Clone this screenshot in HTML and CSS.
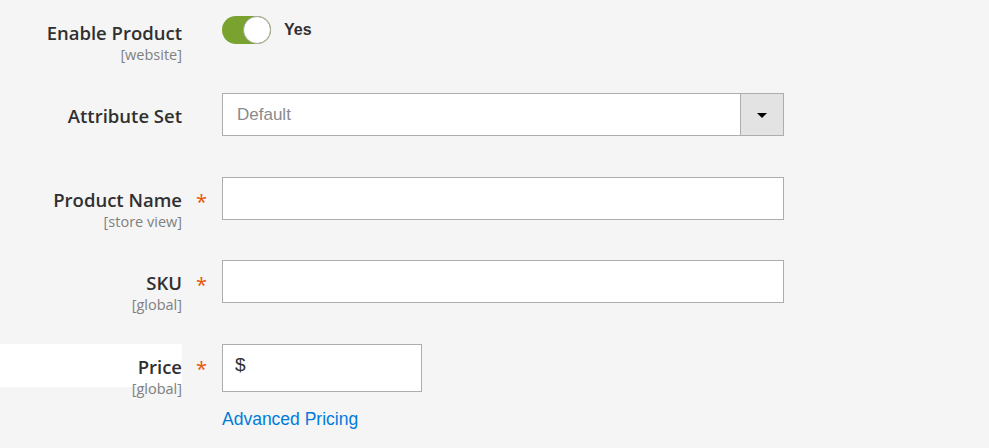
FILE: index.html
```html
<!DOCTYPE html>
<html lang="en">
<head>
    <meta charset="UTF-8">
    <meta name="viewport" content="width=device-width, initial-scale=1.0">
    <title>New Product</title>
    <link rel="stylesheet" href="styles.css">
</head>
<body>
    <div class="form">
        <div class="field field-toggle">
            <div class="field-label">
                <label>Enable Product</label>
                <span class="scope">[website]</span>
            </div>
            <div class="field-mark"></div>
            <div class="field-control">
                <span class="switch"><span class="knob"></span></span>
                <span class="switch-text">Yes</span>
            </div>
        </div>

        <div class="field">
            <div class="field-label">
                <label>Attribute Set</label>
            </div>
            <div class="field-mark"></div>
            <div class="field-control">
                <div class="select">
                    <span class="select-value">Default</span>
                    <span class="select-btn"><span class="arrow"></span></span>
                </div>
            </div>
        </div>

        <div class="field">
            <div class="field-label">
                <label>Product Name</label>
                <span class="scope">[store view]</span>
            </div>
            <div class="field-mark">*</div>
            <div class="field-control">
                <input class="text-input" type="text">
            </div>
        </div>

        <div class="field">
            <div class="field-label">
                <label>SKU</label>
                <span class="scope">[global]</span>
            </div>
            <div class="field-mark">*</div>
            <div class="field-control">
                <input class="text-input" type="text">
            </div>
        </div>

        <div class="field field-price">
            <div class="field-label">
                <label>Price</label>
                <span class="scope">[global]</span>
            </div>
            <div class="field-mark">*</div>
            <div class="field-control">
                <div class="price-input">$</div>
                <a class="link" href="#">Advanced Pricing</a>
            </div>
        </div>
    </div>
</body>
</html>
```

FILE: styles.css
```css
body {
    margin: 0;
    background-color: #f5f5f5;
    font-family: "Open Sans", sans-serif;
    color: #303030;
}
.form {
    padding-top: 10px;
}
.field {
    display: grid;
    grid-template-columns: 182px 40px 562px;
    margin-bottom: 40.5px;
}
.field-toggle {
    margin-bottom: 40px;
}
.field-label {
    text-align: right;
    padding-top: 12px;
    height: 31px;
}
.field-label label {
    display: block;
    font-size: 18.5px;
    font-weight: 600;
    line-height: 21px;
}
.scope {
    display: block;
    margin-top: 3px;
    font-size: 14.5px;
    line-height: 17px;
    color: #808080;
}
.field-price .field-label {
    background: white;
}
.field-mark {
    color: #eb5202;
    font-size: 20px;
    line-height: 1;
    padding-top: 15px;
    padding-left: 14px;
}
.field-toggle .field-control {
    display: flex;
    align-items: flex-start;
    gap: 13px;
    padding-top: 6px;
}
.switch {
    position: relative;
    display: block;
    width: 49px;
    height: 28px;
    border-radius: 14px;
    background: #79a22e;
}
.knob {
    position: absolute;
    right: 0;
    top: 0;
    width: 26px;
    height: 26px;
    border-radius: 50%;
    background: white;
    border: 1px solid #a6a6a6;
}
.switch-text {
    font-family: "Liberation Sans", Arial, sans-serif;
    font-weight: bold;
    font-size: 16px;
    line-height: 1;
    padding-top: 6px;
}
.select {
    display: flex;
    height: 43px;
    box-sizing: border-box;
    border: 1px solid #adadad;
    background: white;
}
.select-value {
    flex: 1;
    font-family: "Liberation Sans", Arial, sans-serif;
    font-size: 17px;
    color: #8a8a8a;
    padding-left: 14px;
    line-height: 41px;
}
.select-btn {
    width: 42px;
    background: #e3e3e3;
    border-left: 1px solid #adadad;
    display: flex;
    align-items: center;
    justify-content: center;
}
.arrow {
    width: 0;
    height: 0;
    border-left: 5px solid transparent;
    border-right: 5px solid transparent;
    border-top: 5px solid #000;
    margin-top: 1px;
}
.text-input {
    display: block;
    width: 100%;
    height: 43px;
    box-sizing: border-box;
    border: 1px solid #adadad;
    background: white;
    margin: 0;
    padding: 0 12px;
    font-size: 16px;
    outline: none;
}
.price-input {
    width: 200px;
    height: 48px;
    box-sizing: border-box;
    border: 1px solid #adadad;
    background: white;
    font-family: "Liberation Sans", Arial, sans-serif;
    font-size: 19px;
    padding: 9px 0 0 12px;
    color: #303030;
}
.link {
    display: inline-block;
    margin-top: 17px;
    font-family: "Liberation Sans", Arial, sans-serif;
    font-size: 17.5px;
    color: #007bdb;
    text-decoration: none;
}
```
